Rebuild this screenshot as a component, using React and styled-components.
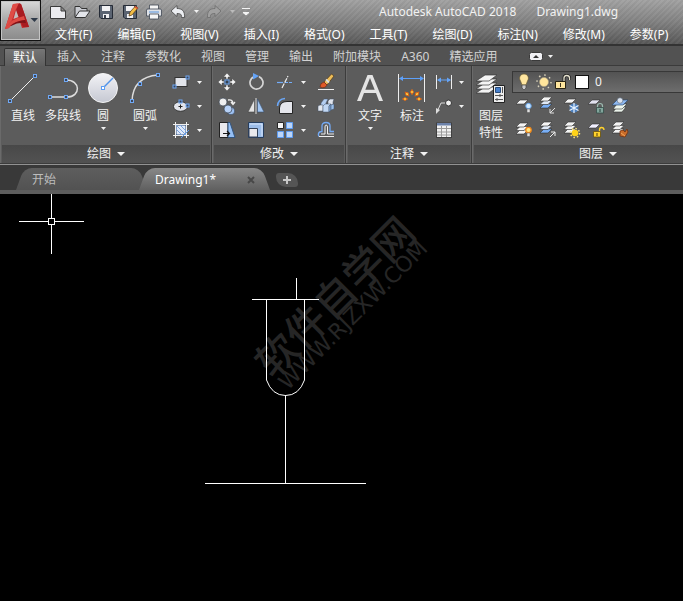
import React from 'react';
import styled, { createGlobalStyle } from 'styled-components';

const Global = createGlobalStyle`
  * { box-sizing: border-box; }
  html, body, #root { height: 100%; }
  body {
    margin: 0;
    background: #000;
    overflow: hidden;
    color: #f2f2f2;
    font: 12px/16px "Noto Sans", "Noto Sans CJK SC", sans-serif;
  }
  button, select {
    margin: 0;
    padding: 0;
    border: 0;
    background: none;
    color: inherit;
    font: inherit;
  }
  svg { display: block; flex: none; }
`;

const Page = styled.div`
  min-height: 100%;
  display: flex;
  flex-direction: column;
`;

const Header = styled.header`
  display: flex;
  border-bottom: 2px solid #333;
  background:
    repeating-linear-gradient(135deg, #ffffff08 0 2px, #00000008 2px 4px),
    linear-gradient(#a2a2a2, #858585 45%, #585858);
`;

const AppButton = styled.button`
  width: 41px;
  height: 41px;
  flex: none;
  display: flex;
  align-items: center;
  border: 1px solid #111;
  background: linear-gradient(#d8d8d8, #a8a8a8 50%, #8a8a8a);
  box-shadow: inset 0 0 0 1px #c4c4c4;
`;

const HeaderRows = styled.div`
  flex: 1;
  min-width: 0;
  padding-left: 5px;
`;

const QuickBar = styled.div`
  display: flex;
  align-items: center;
  height: 23px;
`;

const Tool = styled.button`
  display: flex;
  align-items: center;
  justify-content: center;
  width: ${(p) => p.$w || 24}px;
  height: ${(p) => p.$h || 24}px;
`;

const Title = styled.h1`
  display: flex;
  gap: 20px;
  margin: 0;
  padding-left: 125px;
  font-size: 12px;
  font-weight: 400;
  white-space: nowrap;
`;

const MenuBar = styled.nav`
  display: flex;
  gap: 25px;
  height: 21px;
  align-items: flex-end;
  padding: 0 0 1px 9px;
  white-space: nowrap;
`;

const MenuItem = styled.button`
  flex: none;
  color: #fff;
`;

const TabRow = styled.div`
  display: flex;
  align-items: flex-end;
  height: 20px;
  padding-left: 4px;
  background: #525252;
  border-bottom: 1px solid #3b3b3b;
  white-space: nowrap;
`;

const RibbonTab = styled.button`
  flex: none;
  height: 18px;
  padding: 1px 10px 0;
  color: ${(p) => (p.$active ? '#fff' : '#d2d2d2')};
  ${(p) => p.$active && `
    padding: 0 8px;
    margin-right: 1px;
    margin-bottom: -1px;
    border: 1px solid #333;
    border-bottom: 0;
    border-radius: 2px 2px 0 0;
    background: linear-gradient(#767676, #5e5e5e);
  `}
`;

const Collapse = styled.button`
  display: flex;
  align-items: center;
  gap: 5px;
  height: 18px;
  margin-left: 22px;
`;

const Ribbon = styled.div`
  display: flex;
  overflow: hidden;
  background: #5c5c5c;
  border-bottom: 1px solid #929292;
`;

const Panel = styled.section`
  flex: ${(p) => (p.$grow ? '1 0' : '0 0')} ${(p) => p.$w}px;
  display: flex;
  flex-direction: column;
  border: solid #3c3c3c;
  border-width: 0 1px 1px 0;
  box-shadow: inset 1px 0 #6a6a6a;
`;

const PanelBody = styled.div`
  display: flex;
  padding: 4px 0 3px ${(p) => p.$left}px;
`;

const PanelTitle = styled.button`
  display: flex;
  align-items: center;
  justify-content: center;
  gap: 6px;
  height: 18px;
  margin: 0 1px 0 2px;
  background: linear-gradient(#484848, #525252);
`;

const BigTool = styled.button`
  width: ${(p) => p.$w}px;
  flex: none;
  display: flex;
  flex-direction: column;
  align-items: center;
  gap: 3px;
  padding-top: 2px;
  line-height: 17px;
`;

const BigLabel = styled.span`
  white-space: pre-line;
`;

const ToolGrid = styled.div`
  display: grid;
  grid-template-columns: ${(p) => p.$cols};
  grid-auto-rows: 24px;
  justify-items: center;
  margin-left: ${(p) => p.$gap || 0}px;
`;

const LayerArea = styled.div`
  flex: 1;
  margin-left: 2px;
`;

const LayerBox = styled.div`
  display: flex;
  align-items: center;
  height: 22px;
  margin: 1px 0;
  padding-left: 1px;
  border: 1px solid #383838;
  background: linear-gradient(#535353, #6d6d6d);
`;

const LayerSelect = styled.select`
  flex: 1;
  appearance: none;
  padding-left: 3px;
`;

const FileBar = styled.div`
  display: flex;
  align-items: flex-end;
  height: 29px;
  padding-left: 20px;
  background: #393939;
  border-bottom: 4px solid #5d5d5d;
`;

const FileTab = styled.div`
  position: relative;
  z-index: ${(p) => (p.$active ? 2 : 1)};
  display: flex;
  align-items: center;
  justify-content: space-between;
  width: ${(p) => p.$w}px;
  height: 22px;
  padding: 2px 11px 0 12px;
  color: ${(p) => (p.$active ? '#fff' : '#bdbdbd')};
  &::before, &::after {
    content: '';
    position: absolute;
    z-index: -1;
    top: 0;
    bottom: 0;
    width: 65%;
    background: ${(p) => (p.$active ? 'linear-gradient(#888, #606060)' : 'linear-gradient(#5e5e5e, #525252)')};
  }
  &::before { left: 0; transform: skewX(-20deg); border-radius: 8px 0 0 0; }
  &::after { right: 0; transform: skewX(20deg); border-radius: 0 8px 0 0; }
`;

const AddTab = styled.button`
  display: flex;
  align-items: center;
  justify-content: center;
  width: 22px;
  height: 14px;
  margin: 0 0 3px 10px;
  border-radius: 3px 10px 3px 10px;
  background: #555;
`;

const Canvas = styled.main`
  position: relative;
  flex: 1;
  background: #000;
  overflow: hidden;
`;

const Watermark = styled.div`
  position: absolute;
  left: 230px;
  top: 79px;
  width: 220px;
  text-align: center;
  color: #262626;
  transform: rotate(-45deg);
  white-space: nowrap;
`;

const MarkName = styled.div`
  font: 500 41px/38px "Noto Sans CJK SC", sans-serif;
`;

const MarkSite = styled.div`
  font: 22px/20px "DejaVu Sans", sans-serif;
`;

const Drawing = styled.svg`
  position: absolute;
  left: 0;
  top: 0;
`;

const Down = ({ s = 5, color = '#f2f2f2' }) => (
  <svg width={s} height={Math.ceil(s / 2)} viewBox="0 0 10 5" preserveAspectRatio="none">
    <path d="M0 0H10L5 5Z" fill={color} />
  </svg>
);

const Handle = ({ x, y }) => (
  <rect x={x - 1.5} y={y - 1.5} width="3" height="3" fill="#3d4658" stroke="#6fa8f5" />
);

const Sheet = ({ y, x = 0, fill = '#f4f4f4' }) => (
  <path d={`M${x + 5} ${y}h8l-4 4h-8z`} fill={fill} stroke="#303030" strokeWidth=".6" />
);

const Stack = ({ blue, y = 2 }) => (
  <g>
    <Sheet y={y + 7} fill={blue === 3 ? '#78aef5' : '#f4f4f4'} />
    <Sheet y={y + 3.5} fill={blue ? '#dfe8f6' : '#f4f4f4'} />
    <Sheet y={y} />
  </g>
);

const arrowHead = (r) => (
  <g transform={`rotate(${r} 9 9)`} key={r}>
    <path d="M9 0L12.500 4H10V6H8V4H5.500Z" fill="#f4f4f4" stroke="#333" strokeWidth=".4" />
  </g>
);

const glyphs = {
  fresh: <path d="M1.500 3.500H12L16.500 8V15.500H1.500ZM12 3.500V8H16.500" fill="#ececf0" stroke="#3a3a3a" />,
  open: (
    <g stroke="#333" strokeLinejoin="round">
      <path d="M2 14V3.500H7L8.500 5.500H14V8" fill="#c9cbd1" />
      <path d="M2 14.500L6.500 8H17L12.500 14.500Z" fill="#e3e5ea" />
    </g>
  ),
  save: (
    <g>
      <path d="M2.500 2.500H15.500V15.500H4L2.500 14Z" fill="#5b6472" stroke="#252b36" />
      <path d="M5 3H13V8H5ZM6 11H12V15H6Z" fill="#f1f1f3" />
      <path d="M7 12H9V15H7Z" fill="#39404c" />
    </g>
  ),
  saveAs: (
    <g>
      <path d="M2.500 2.500H15.500V15.500H4L2.500 14Z" fill="#5b6472" stroke="#252b36" />
      <path d="M5 3H13V8H5ZM6 11H12V15H6Z" fill="#f1f1f3" />
      <path d="M8 13L9 9L14.500 3L17 5L11 12Z" fill="#f3bd45" stroke="#4d3515" strokeWidth=".7" />
      <path d="M14.500 3L17 5L16 6.300L13.400 4.200Z" fill="#d6523d" />
    </g>
  ),
  print: (
    <g stroke="#404854" strokeWidth=".8">
      <path d="M4.500 2H13.500V7H4.500Z" fill="#f6f6f6" />
      <path d="M1.500 7Q1.500 6 3 6H15Q16.500 6 16.500 7V13H1.500Z" fill="#dfe2e7" />
      <path d="M4.500 11H13.500V16H4.500Z" fill="#f6f6f6" />
      <path d="M4 9H14" stroke="#85aee0" strokeWidth="1.500" />
    </g>
  ),
  undo: <path d="M2 8L8 2.500V5.500C13 5.500 16 8 15.500 14.500H12.500C13 11.500 11.500 10.500 8 10.500V13.500Z" fill="#eceef2" stroke="#444" strokeWidth=".8" />,
  redo: <path d="M16 8L10 2.500V5.500C5 5.500 2 8 2.500 14.500H5.500C5 11.500 6.500 10.500 10 10.500V13.500Z" fill="#a0a0a0" stroke="#6c6c6c" strokeWidth=".8" />,
  more: <path d="M5 5.500H13M6 9.500H12L9 12Z" fill="#f4f4f4" stroke="#f4f4f4" />,
  rect: (
    <g>
      <rect x="3" y="4.500" width="12" height="9" fill="#e2e4ea" stroke="#333" />
      <Handle x={2.5} y={13.5} /><Handle x={15.5} y={4.5} />
    </g>
  ),
  ellipse: (
    <g>
      <ellipse cx="8.500" cy="9.500" rx="7" ry="4.800" fill="#e2e4ea" stroke="#333" />
      <path d="M6.500 9.500H10.500M8.500 7.500V11.500" stroke="#222" />
      <Handle x={8.5} y={4.5} /><Handle x={15.5} y={8.5} />
    </g>
  ),
  hatch: (
    <g>
      <rect x="4" y="4" width="10" height="10" fill="#e0eafa" stroke="#2b4a78" />
      <path d="M4 8L10 14M4 4L14 14M8 4L14 10" stroke="#7ba3de" />
      <path d="M3.500 1V17M14.500 1V17M1 3.500H17M1 14.500H17" stroke="#f0f0f0" />
      <path d="M9 17L17 9" stroke="#5c9df0" />
    </g>
  ),
  move: (
    <g>{[0, 90, 180, 270].map(arrowHead)}<rect x="7" y="7" width="4" height="4" fill="#37424f" stroke="#6fa8f5" /></g>
  ),
  rotate: (
    <g>
      <path d="M7 3.600A6.500 6.500 0 1 0 12 3.600" fill="none" stroke="#d6d6d6" strokeWidth="1.700" />
      <path d="M6 0L12 3L6 6.500Z" fill="#65a4f7" />
    </g>
  ),
  trim: (
    <g stroke="#73adfa" strokeWidth="1.200">
      <path d="M1 9.500H7" /><path d="M9 9.500H17" strokeDasharray="3 1" />
      <path d="M6 15L12 3" stroke="#eee" strokeDasharray="5 1" />
    </g>
  ),
  erase: (
    <g>
      <path d="M1 16.500H17" stroke="#eee" />
      <path d="M7 9L14.500 1L17 3L10 12Z" fill="#edbd58" stroke="#4b371d" strokeWidth=".7" />
      <path d="M9 6.500L12 9.500" stroke="#ddd" strokeWidth="2" />
      <path d="M3 14Q3 10 7 9L10 12Q8 16 3 14Z" fill="#df5928" stroke="#742d17" strokeWidth=".7" />
    </g>
  ),
  copy: (
    <g stroke="#394452" strokeWidth=".7">
      <circle cx="5" cy="5" r="4" fill="#eee" /><circle cx="13" cy="14" r="3.800" fill="#9cbff0" />
      <circle cx="10" cy="12" r="4" fill="#b6d0f5" />
      <path d="M10 3Q15 2 15 7M13 5L15 7.500L17 5" fill="none" stroke="#eee" strokeWidth="1.300" />
    </g>
  ),
  mirror: (
    <g>
      <path d="M7.500 2V15H1Z" fill="#e4e4e4" stroke="#444" strokeWidth=".6" />
      <path d="M10.500 2V15H17Z" fill="#a3c6f2" stroke="#3b5270" strokeWidth=".6" />
      <path d="M9 1V17" stroke="#ddd" />
    </g>
  ),
  fillet: (
    <g>
      <path d="M3.500 16.500V11Q4 4.500 11 4.500H16.500V16.500Z" fill="#e5e6ec" stroke="#242424" />
      <path d="M1.500 9Q2 2 9 1.500" fill="none" stroke="#6aa6f6" strokeWidth="1.500" />
    </g>
  ),
  explode: (
    <g stroke="#42536a" strokeWidth=".5">
      <path d="M4 6L7 2H11L9 6V9H4Z" fill="#b4cef1" /><path d="M11 4L13 2H17L16 5V8H11Z" fill="#e0e4ec" />
      <path d="M1 9L3 8H6V14H1Z" fill="#e4e8ef" /><path d="M6 9L8 7H14L12 9V15H6Z" fill="#c1d7f4" />
      <path d="M12 9L14 7V13L12 15Z" fill="#7fa6d8" /><path d="M14 8L17 7V12L14 13Z" fill="#9abee9" />
    </g>
  ),
  stretch: (
    <g>
      <path d="M1.500 1.500H10V16.500H1.500Z" fill="#e9e9ed" stroke="#222" />
      <path d="M10 1.500H12L17 16.500H10Z" fill="#95bff4" stroke="#31547f" />
      <path d="M5 12.500H11M9 10L11.500 12.500L9 15" fill="none" stroke="#151515" strokeWidth="1.200" />
    </g>
  ),
  scale: (
    <g>
      <path d="M1.500 1.500H16.500V16.500H1.500Z" fill="#9cbde9" stroke="#263d5d" />
      <path d="M3 3H15V15" fill="none" stroke="#d9e7fb" />
      <path d="M2 7.500H10.500V16H2Z" fill="#e9e9ed" stroke="#34435a" />
    </g>
  ),
  array: (
    <g>
      <path d="M1.500 1.500H7.500V7.500H1.500Z" fill="#f4f4f4" stroke="#252525" />
      <path d="M10.500 1.500H16.500V7.500H10.500ZM1.500 10.500H7.500V16.500H1.500ZM10.500 10.500H16.500V16.500H10.500Z" fill="#bcd5f8" stroke="#5e9cf0" />
    </g>
  ),
  offset: (
    <g fill="none">
      <path d="M2.500 15.500Q1 15 1.500 12.500Q2 10.500 5 10.500V5Q5 1.500 9 1.500Q13 1.500 13 5V10.500H17" stroke="#74aaf5" strokeWidth="1.300" />
      <path d="M2 15.500H17M4 13H8V6Q8 4 9 4Q10.500 4 10.500 6V13H17" stroke="#eee" />
    </g>
  ),
  linear: (
    <g>
      <path d="M1.500 2V16M16.500 2V16" stroke="#eee" />
      <path d="M3 7H15" stroke="#65a4f7" /><path d="M2 7L6 4.500V9.500ZM16 7L12 4.500V9.500Z" fill="#65a4f7" />
    </g>
  ),
  leader: (
    <g>
      <path d="M2 15L6 6H11" fill="none" stroke="#d9d9d9" /><path d="M1 17L1 11L5 13Z" fill="#ddd" />
      <circle cx="13.500" cy="6" r="3" fill="#f0f0f0" stroke="#333" />
    </g>
  ),
  table: (
    <g>
      <rect x="1.500" y="2" width="15" height="14.500" fill="#f1f1f1" stroke="#404040" />
      <rect x="2" y="2" width="14" height="2.500" fill="#6c82aa" />
      <path d="M2 7.500H16M2 11H16M2 14H16M6.500 5V16M11.500 5V16" stroke="#9b9b9b" />
    </g>
  ),
  bulb: (
    <g>
      <path d="M9 1C5 1 3.500 5 5.500 8L7 12H11L12.500 8C14.500 5 13 1 9 1Z" fill="#ffe6a0" stroke="#6a5b32" strokeWidth=".7" />
      <path d="M7 12H11V15L9 17L7 15Z" fill="#c9c9ca" stroke="#444" strokeWidth=".7" />
    </g>
  ),
  sun: (
    <g>
      <circle cx="9" cy="9" r="7" fill="none" stroke="#d9d2bb" strokeWidth="1.500" strokeDasharray="1.500 4" />
      <circle cx="9" cy="9" r="4.500" fill="#ffe59c" stroke="#aaa083" strokeWidth=".6" />
    </g>
  ),
  unlock: (
    <g>
      <path d="M10 9V5Q10 2.500 12.500 2.500Q15.500 2.500 15.500 5V7" fill="none" stroke="#222" strokeWidth="3" />
      <path d="M10 9V5Q10 2.500 12.500 2.500Q15.500 2.500 15.500 5V7" fill="none" stroke="#e6e2cf" strokeWidth="1.300" />
      <path d="M1.500 8.500H11.500V15.500H1.500Z" fill="#ffe69e" stroke="#282313" />
      <path d="M6.500 10V14" stroke="#3c321c" />
    </g>
  ),
  swatch: <rect x="2.500" y="2.500" width="13" height="13" fill="#fff" stroke="#111" />,
  layOff: (
    <g><Sheet y={3} /><circle cx="13.500" cy="9" r="2.700" fill="#d4eaff" stroke="#6aa9ee" /><path d="M12 12H15V15.500H12Z" fill="#e0e0e0" stroke="#555" strokeWidth=".5" /></g>
  ),
  layIso: (
    <g><Stack blue={3} y={0} /><path d="M16 11L11 16M11 12V16H15" fill="none" stroke="#e0e0e0" /></g>
  ),
  layFreeze: (
    <g>
      <Sheet y={2} />
      <circle cx="11" cy="11" r="4.500" fill="#4c7fbd" />
      <path d="M11 6V16M6.500 8.500L15.500 13.500M6.500 13.500L15.500 8.500" stroke="#e6f2ff" strokeWidth="1.200" />
    </g>
  ),
  layLock: (
    <g><Sheet y={3} fill="#e2e2f0" /><path d="M10.500 11V9Q10.500 6.500 13 6.500Q15.500 6.500 15.500 9V11" fill="none" stroke="#9dbbb2" strokeWidth="1.200" /><path d="M9.500 10.500H16.500V16H9.500Z" fill="#82a59c" stroke="#344c47" strokeWidth=".8" /><path d="M13 12V15" stroke="#263f38" /></g>
  ),
  layCurrent: (
    <g stroke="#303030" strokeWidth=".6">
      <path d="M6 10H15L11 15H2Z" fill="#ecf4ec" /><path d="M6 7H16L11 12H2Z" fill="#ecf4ec" />
      <path d="M6 3H17L12 8H1Z" fill="#8db7ee" stroke="#243f65" /><circle cx="9" cy="3.500" r="2.800" fill="#dce3ee" stroke="#596678" />
    </g>
  ),
  layOn: (
    <g><Stack y={2} /><circle cx="13.500" cy="9" r="2.700" fill="#ffe680" stroke="#f38a1b" strokeWidth="1.300" /><path d="M12 12H15V15.500H12Z" fill="#e0e0e0" stroke="#555" strokeWidth=".5" /></g>
  ),
  layUniso: (
    <g><Stack blue={3} y={1} /><path d="M11 16L16 11M12 11H16V15" fill="none" stroke="#eee" /></g>
  ),
  layThaw: (
    <g><Stack y={1} /><circle cx="12" cy="12" r="4.500" fill="none" stroke="#ffe67a" strokeWidth="1.500" strokeDasharray="1.500 2" /><circle cx="12" cy="12" r="3.300" fill="#ffd318" /></g>
  ),
  layUnlock: (
    <g><Sheet y={3} fill="#f1efff" /><path d="M12.500 11V9Q12.500 6.500 14.500 6.500Q17 6.500 17 9" fill="none" stroke="#ffd22c" strokeWidth="1.300" /><path d="M6.500 10.500H13.500V16H6.500Z" fill="#ffd22c" stroke="#68510d" strokeWidth=".8" /><path d="M10 12V15" stroke="#513c10" /></g>
  ),
  layMatch: (
    <g><Stack y={1} /><path d="M9 10L12 9L14 11L16 8L17 11L14 16L9 15Z" fill="#c96c2a" stroke="#713313" strokeWidth=".8" /><path d="M10 12L14 15" stroke="#f1a85b" /></g>
  ),
};

const Glyph = ({ name }) => (
  <svg width="18" height="18" viewBox="0 0 18 18" aria-hidden="true">{glyphs[name]}</svg>
);

const bigGlyphs = {
  line: <g><path d="M3 29L28 4" stroke="#eee" /><Handle x={3} y={29} /><Handle x={28} y={4} /></g>,
  pline: (
    <g><path d="M3 25H20C34 25 34 8 19 8" fill="none" stroke="#ddd" strokeWidth="1.500" /><Handle x={3} y={25} /><Handle x={19} y={25} /><Handle x={19} y={8} /></g>
  ),
  circle: (
    <g>
      <defs><linearGradient id="disc" x2="0" y2="1"><stop stopColor="#f3f3f6" /><stop offset="1" stopColor="#c5c8d2" /></linearGradient></defs>
      <circle cx="16" cy="16" r="14.500" fill="url(#disc)" stroke="#f4f4f4" />
      <path d="M16 16L26 6" stroke="#4f91e8" strokeWidth="1.500" /><rect x="14.500" y="14.500" width="3" height="3" fill="#fff" stroke="#5b9df4" />
    </g>
  ),
  arc: (
    <g><path d="M3 29Q4 5 29 3" fill="none" stroke="#ddd" strokeWidth="1.500" /><Handle x={3} y={29} /><Handle x={11} y={12} /><Handle x={29} y={3} /></g>
  ),
  text: <path d="M3 29L13.500 3H18.500L29 29H25L22 21H10L7 29ZM11.300 17.800H20.700L16 6Z" fill="#e4e4e4" />,
  dim: (
    <g>
      <path d="M2.500 2V30M28.500 2V30" stroke="#eee" /><path d="M4 6.500H27" stroke="#5da0fa" />
      <path d="M3 6.500L7 4V9ZM28 6.500L24 4V9Z" fill="#5da0fa" />
      {[-90, -45, 0, 45, 90].map((r) => (
        <path key={r} transform={`rotate(${r} 16 27)`} d="M16 17.500L17.500 20L16 22.500L14.500 20Z" fill="#ffdc48" stroke="#dd6517" />
      ))}
    </g>
  ),
  layers: (
    <g>
      {[15, 11, 7, 3].map((y) => <path key={y} d={`M10 ${y}H22L14 ${y + 6}H1Z`} fill="#f4f4f4" stroke="#383838" strokeWidth=".7" />)}
      <path d="M18.500 13.500H29.500V30.500H18.500Z" fill="#eee" stroke="#222" />
      <path d="M20.500 15.500H25.500V20.500H20.500Z" fill="#4780cc" stroke="#294c7b" /><path d="M27.500 15V21M20 23.500H28M20 27.500H28M25 22V25M22 26V29" stroke="#555" />
    </g>
  ),
};

const Big = ({ name, label, w, menu }) => (
  <BigTool $w={w}>
    <svg width="32" height="32" viewBox="0 0 32 32" aria-hidden="true">{bigGlyphs[name]}</svg>
    <BigLabel>{label}</BigLabel>
    {menu && <Down />}
  </BigTool>
);

const Small = ({ name, w, h, label }) => (
  <Tool $w={w} $h={h} aria-label={label || name}><Glyph name={name} /></Tool>
);

const Drop = ({ label, color, w = 8 }) => (
  <Tool $w={w} aria-label={`${label} options`}><Down color={color} /></Tool>
);

const RibbonPanel = ({ title, w, left, grow, children }) => (
  <Panel $w={w} $grow={grow}>
    <PanelBody $left={left}>{children}</PanelBody>
    <PanelTitle>{title}<Down s={8} /></PanelTitle>
  </Panel>
);

const menus = ['文件(F)', '编辑(E)', '视图(V)', '插入(I)', '格式(O)', '工具(T)', '绘图(D)', '标注(N)', '修改(M)', '参数(P)'];
const tabs = ['默认', '插入', '注释', '参数化', '视图', '管理', '输出', '附加模块', 'A360', '精选应用'];
const modify = [
  ['move', 'rotate', 'trim', true, 'erase'],
  ['copy', 'mirror', 'fillet', true, 'explode'],
  ['stretch', 'scale', 'array', true, 'offset'],
];
const layerTools = ['layOff', 'layIso', 'layFreeze', 'layLock', 'layCurrent', 'layOn', 'layUniso', 'layThaw', 'layUnlock', 'layMatch'];

export default function App() {
  return (
    <Page>
      <Global />
      <Header>
        <AppButton aria-label="Application menu">
          <svg width="39" height="39" viewBox="0 0 39 39">
            <path d="M4 28L12 3H20L28 26L21 27L19 21L9 24L8 27Z" fill="#c5292c" />
            <path d="M12 3L18 2L14 10L11 19L4 28Z" fill="#df4c46" />
            <path d="M18 2L20 3L28 26L22 26L15 10Z" fill="#a81c21" />
            <path d="M4 28Q9 18 23 15L24 19Q13 20 8 27Z" fill="#dd4a43" />
            <path d="M9 25Q14 20 24 19L25 22Q17 21 10 25Z" fill="#801318" />
            <path d="M15 9L17.500 16L12.500 18Z" fill="#c5bcbc" />
            <path d="M29.500 17H37L33.500 21Z" fill="#2f3a49" />
          </svg>
        </AppButton>
        <HeaderRows>
          <QuickBar>
            {['fresh', 'open', 'save', 'saveAs', 'print', 'undo'].map((n) => <Small key={n} name={n} />)}
            <Drop label="undo" w={12} />
            <Small name="redo" />
            <Drop label="redo" w={12} color="#bcbcbc" />
            <Small name="more" w={16} />
            <Title><span>Autodesk AutoCAD 2018</span><span>Drawing1.dwg</span></Title>
          </QuickBar>
          <MenuBar>{menus.map((m) => <MenuItem key={m}>{m}</MenuItem>)}</MenuBar>
        </HeaderRows>
      </Header>
      <TabRow>
        {tabs.map((t, i) => <RibbonTab key={t} $active={i === 0}>{t}</RibbonTab>)}
        <Collapse aria-label="Minimize ribbon">
          <svg width="14" height="9" viewBox="0 0 14 9">
            <rect x=".5" y=".5" width="13" height="8" rx="2" fill="#f0f0f4" stroke="#3a3a3a" />
            <path d="M4 6H10L7 3Z" fill="#333" />
          </svg>
          <Down />
        </Collapse>
      </TabRow>
      <Ribbon>
        <RibbonPanel title="绘图" w={212} left={3}>
          <Big name="line" label="直线" w={40} />
          <Big name="pline" label="多段线" w={40} />
          <Big name="circle" label="圆" w={40} menu />
          <Big name="arc" label="圆弧" w={44} menu />
          <ToolGrid $cols="24px 12px" $gap={2}>
            {['rect', 'ellipse', 'hatch'].map((n) => (
              <React.Fragment key={n}><Small name={n} /><Drop label={n} /></React.Fragment>
            ))}
          </ToolGrid>
        </RibbonPanel>
        <RibbonPanel title="修改" w={134} left={1}>
          <ToolGrid $cols="28px 30px 28px 8px 38px">
            {modify.flat().map((n, i) => (n === true ? <Drop key={i} label={modify.flat()[i - 1]} /> : <Small key={i} name={n} />))}
          </ToolGrid>
        </RibbonPanel>
        <RibbonPanel title="注释" w={126} left={4}>
          <Big name="text" label="文字" w={40} menu />
          <Big name="dim" label="标注" w={44} />
          <ToolGrid $cols="20px 14px">
            <Small name="linear" w={20} /><Drop label="linear" />
            <Small name="leader" w={20} /><Drop label="leader" />
            <Small name="table" w={20} />
          </ToolGrid>
        </RibbonPanel>
        <RibbonPanel title="图层" w={252} left={0} grow>
          <Big name="layers" label={'图层\n特性'} w={38} />
          <LayerArea>
            <LayerBox>
              <Small name="bulb" w={20} h={20} />
              <Small name="sun" w={20} h={20} />
              <Small name="unlock" w={18} h={20} />
              <Small name="swatch" w={20} h={20} />
              <LayerSelect aria-label="Layer"><option>0</option></LayerSelect>
            </LayerBox>
            <ToolGrid $cols="repeat(5, 24px)">{layerTools.map((n) => <Small key={n} name={n} />)}</ToolGrid>
          </LayerArea>
        </RibbonPanel>
      </Ribbon>
      <FileBar>
        <FileTab $w={123}><button>开始</button></FileTab>
        <FileTab $active $w={123}>
          <button>Drawing1*</button>
          <button aria-label="Close tab">
            <svg width="8" height="8" viewBox="0 0 8 8"><path d="M1 1L7 7M7 1L1 7" stroke="#484848" strokeWidth="2" /></svg>
          </button>
        </FileTab>
        <AddTab aria-label="New tab">
          <svg width="8" height="8" viewBox="0 0 8 8"><path d="M4 0V8M0 4H8" stroke="#c8c8c8" strokeWidth="2" /></svg>
        </AddTab>
      </FileBar>
      <Canvas>
        <Watermark>
          <MarkName>软件自学网</MarkName>
          <MarkSite>WWW.RJZXW.COM</MarkSite>
        </Watermark>
        <Drawing width="400" height="320" viewBox="0 0 400 320" fill="none" stroke="#fff">
          <path d="M19 27.500H84M51.500 0V60" />
          <rect x="48.500" y="24.500" width="6" height="6" fill="#000" />
          <path d="M296.500 84V105M252 105.500H319M266.500 105V186Q272 201.500 285.500 201.500Q299 201.500 304.500 186V105M285.500 201V289M205 289.500H366" />
        </Drawing>
      </Canvas>
    </Page>
  );
}
